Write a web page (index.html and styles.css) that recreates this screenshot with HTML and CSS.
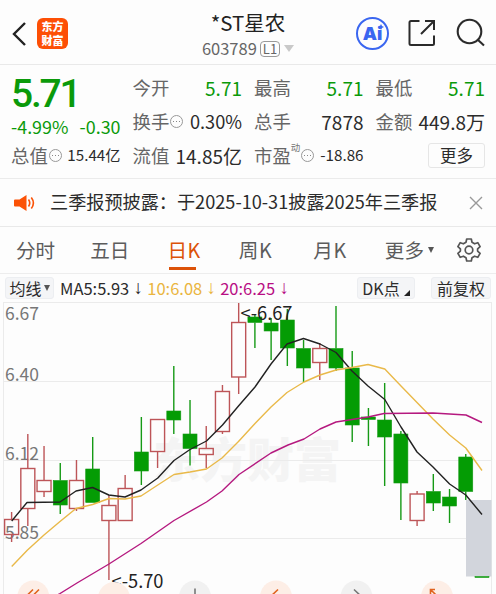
FILE: index.html
```html
<!DOCTYPE html>
<html lang="zh-CN">
<head>
  <meta charset="UTF-8">
  <meta name="viewport" content="width=device-width, initial-scale=1.0">
  <title>*ST星农 603789</title>
  <link rel="stylesheet" href="styles.css">
</head>
<body>
  <!-- Header -->
  <header class="header">
    <div class="header-left">
      <svg class="back" width="16" height="26" viewBox="0 0 16 26"><path d="M14 2 L3 13 L14 24"/></svg>
      <div class="logo"><span>东方</span><span>财富</span></div>
    </div>
    <div class="header-title">
      <h1>*ST星农</h1>
      <div class="code">603789<span class="level">L1</span><i class="caret"></i></div>
    </div>
    <div class="header-right">
      <div class="ai">Ai<svg class="spark" width="6" height="6" viewBox="0 0 6 6"><path d="M3 0 L4 2 L6 3 L4 4 L3 6 L2 4 L0 3 L2 2 Z"/></svg></div>
      <svg class="share" width="28" height="28" viewBox="0 0 28 28"><path d="M11.5 2 H3 Q1.5 2 1.5 3.5 V24.5 Q1.5 26 3 26 H24.5 Q26 26 26 24.5 V16.5 M17 2 H26 V11 M26 2 L13 15"/></svg>
      <svg class="search" width="30" height="30" viewBox="0 0 30 30"><circle cx="13.5" cy="13.5" r="11.8"/><path d="M21.5 21.5 L28 27.5"/></svg>
    </div>
  </header>

  <!-- Quote -->
  <section class="quote">
    <div class="quote-main">
      <div class="price">5.71</div>
      <div class="change"><span>-4.99%</span><span>-0.30</span></div>
      <div class="cell"><label>总值</label><i class="info"></i><b class="small">15.44亿</b></div>
    </div>
    <div class="quote-col">
      <div class="cell"><label>今开</label><b class="down">5.71</b></div>
      <div class="cell"><label>换手</label><i class="info"></i><b class="percent">0.30%</b></div>
      <div class="cell"><label>流值</label><b>14.85亿</b></div>
    </div>
    <div class="quote-col">
      <div class="cell"><label>最高</label><b class="down">5.71</b></div>
      <div class="cell"><label>总手</label><b>7878</b></div>
      <div class="cell"><label>市盈</label><sup>动</sup><i class="info"></i><b class="small">-18.86</b></div>
    </div>
    <div class="quote-col">
      <div class="cell"><label>最低</label><b class="down">5.71</b></div>
      <div class="cell"><label>金额</label><b>449.8万</b></div>
      <div class="cell"><button class="more">更多</button></div>
    </div>
  </section>

  <!-- Notice -->
  <div class="notice">
    <svg class="horn" width="21" height="18" viewBox="0 0 21 18">
      <path class="horn-body" d="M1 5.5 H5.5 L12.5 1 V17 L5.5 12.5 H1 Q0 12.5 0 11.5 V6.5 Q0 5.5 1 5.5 Z"/>
      <path class="horn-wave" d="M14.5 5.5 Q17 9 14.5 12.5 M17.3 3.5 Q21.5 9 17.3 14.5"/>
    </svg>
    <p>三季报预披露：于2025-10-31披露2025年三季报</p>
    <svg class="close" width="14" height="14" viewBox="0 0 14 14"><path d="M1 1 L13 13 M13 1 L1 13"/></svg>
  </div>

  <!-- Period tabs -->
  <nav class="tabs">
    <span>分时</span>
    <span class="five">五日</span>
    <span class="k active">日K</span>
    <span class="k">周K</span>
    <span class="k month">月K</span>
    <span>更多<i class="tri"></i></span>
    <svg class="gear" width="24" height="24" viewBox="0 0 24 24">
      <path d="M9.7 1 H14.3 L15 4.3 L17.6 5.8 L20.8 4.7 L23.1 8.7 L20.6 10.9 V13.1 L23.1 15.3 L20.8 19.3 L17.6 18.2 L15 19.7 L14.3 23 H9.7 L9 19.7 L6.4 18.2 L3.2 19.3 L0.9 15.3 L3.4 13.1 V10.9 L0.9 8.7 L3.2 4.7 L6.4 5.8 L9 4.3 Z"/>
      <circle cx="12" cy="12" r="3.8"/>
    </svg>
  </nav>

  <!-- Moving averages -->
  <div class="ma-bar">
    <span class="pill pill-ma">均线<i class="tri"></i></span>
    <span class="ma ma5">MA5:5.93<em>↓</em></span>
    <span class="ma ma10">10:6.08<em>↓</em></span>
    <span class="ma ma20">20:6.25<em>↓</em></span>
    <span class="pill pill-dk">DK点<i class="corner"></i></span>
    <span class="pill pill-fq">前复权</span>
  </div>

  <!-- Candlestick chart -->
  <svg class="chart" width="496" height="292" viewBox="0 302 496 292">
    <text class="watermark" x="153" y="477">东方财富</text>
    <path class="grid" d="M3.5 302.5 H491.5 M3.5 381.5 H491.5 M3.5 460.5 H491.5 M3.5 538.5 H491.5 M3.5 302 V594 M491.5 302 V594"/>
    <g class="axis">
      <text x="5" y="320">6.67</text>
      <text x="5" y="381">6.40</text>
      <text x="5" y="460">6.12</text>
      <text x="5" y="538.5">5.85</text>
    </g>
    <rect class="range" x="466" y="500" width="25.5" height="76.5"/>
    <g id="candles"></g>
    <polyline class="line line5" points="11.7,521 27,502.5 60,502 76,491 92.6,487.5 108.8,495 125,497 141,490 157.8,478 174,460.5 190,449.5 206.5,441 222.5,425 238.5,406 255,387 271,364 287,344 303.5,338.5 320,344 336,352.5 352,371 368,386 384.8,399.5 401,427 417,452 433,467 449.6,484 465.8,495 482,514.5"/>
    <polyline class="line line10" points="11.7,566.5 27.5,550 44,535 60,521.5 76,508.5 92.6,504.5 109,498.5 125,499 141,496 157.8,485 174,474.5 190,472 206.5,469 222,458 238.5,441.5 255,423.5 271,407 287,392.5 304,382 320,375 336,370 352,367.5 368,364.5 384.8,369 401,386 417,402.5 433,419 449.6,435 465.8,448 482,470.5"/>
    <polyline class="line line20" points="42,604 60,593.5 77,583 109,564 141,543.5 174,520.5 206.5,502 222,491 239,474.5 271,453 288,445 304,439 320,429 336,422 352,419.5 368,417 384,413.5 433,413 466,415 482,422.5"/>
    <g class="mark">
      <text x="240.5" y="319.5">&lt;-6.67</text>
      <text x="111.5" y="588">&lt;-5.70</text>
    </g>
    <g class="signals">
      <circle class="warm" cx="33.3" cy="596.5" r="16"/>
      <circle class="warm" cx="114" cy="598" r="16"/>
      <circle class="cool" cx="195" cy="596.5" r="16"/>
      <circle class="warm" cx="276" cy="596.5" r="16"/>
      <circle class="cool" cx="356.5" cy="596.5" r="16"/>
      <circle class="warm" cx="437" cy="596.5" r="16"/>
      <path class="warm-stroke" d="M33 589.5 L25 597.5 M39 589.5 L31 597.5 M278 589.5 L269 598 M435 589.5 H430.5 V594 M430.5 589.5 L439 598"/>
      <path class="cool-stroke" d="M195 588.5 V600 M354 589.5 L363 598"/>
    </g>
  </svg>

  <script>
    // [wick top, body top, body bottom, wick bottom, rising]
    const candles = [
      [512, 519.5, 534.5, 542, 1],
      [434, 468.5, 508.5, 526, 1],
      [446, 480.5, 491.5, 497, 1],
      [463, 480.5, 505, 514, 0],
      [460, 480.5, 508.5, 511, 1],
      [437, 469, 502.5, 502.5, 0],
      [495, 505.5, 520.5, 580, 1],
      [475, 488.5, 520.5, 520.5, 1],
      [417, 452, 471, 485, 0],
      [419.5, 419.5, 451.5, 468, 1],
      [366, 411, 420, 434, 0],
      [400, 434, 448.5, 465.5, 0],
      [426, 448.5, 454.5, 468, 1],
      [385, 391.5, 431.5, 434, 1],
      [303, 322.5, 377, 394, 1],
      [315, 317, 322.5, 348, 0],
      [318, 323, 331, 360, 0],
      [309, 320, 348, 366, 0],
      [340, 348.5, 368, 382, 0],
      [343, 348.5, 362.5, 380, 1],
      [306, 348.5, 368, 371, 0],
      [351, 368, 425, 442, 0],
      [408, 417, 419.5, 446, 0],
      [383, 420, 437, 486, 0],
      [431, 434, 483, 520, 0],
      [491, 494, 520.5, 526, 1],
      [474, 491.5, 503, 511, 0],
      [489, 497, 506, 523, 0],
      [454, 457, 491.5, 500, 0],
      [576.5, 576.5, 577.5, 577.5, 0]
    ];

    const step = 16.22;
    let html = "";
    candles.forEach(([high, top, bottom, low, up], i) => {
      const x = 11.6 + i * step;
      html += `<g class="${up ? "up" : "fall"}">` +
        `<path d="M${x} ${high} V${top} M${x} ${bottom} V${low}"/>` +
        `<rect x="${x - 7}" y="${top}" width="14" height="${bottom - top}"/></g>`;
    });
    document.getElementById("candles").innerHTML = html;
  </script>
</body>
</html>
```

FILE: styles.css
```css
/* General */
* {
  box-sizing: border-box;
}

body {
  margin: 0;
  width: 496px;
  height: 594px;
  overflow: hidden;
  background: #fdfdfd;
  color: #2b2b2b;
  font-family: "Noto Sans CJK SC", sans-serif;
  line-height: 1;
}

svg {
  display: block;
  flex: none;
  fill: none;
}

i, em, b {
  font-style: normal;
  font-weight: normal;
}

/* Header */
.header {
  display: grid;
  grid-template-columns: 1fr 100px 1fr;
  height: 65px;
  padding: 0 11px;
  border-bottom: 1px solid #e9e9e9;
}

.header-left {
  display: flex;
  align-items: center;
  gap: 10px;
  padding-top: 3px;
}

.back {
  stroke: #222;
  stroke-width: 2.4;
}

.logo {
  display: flex;
  flex-direction: column;
  align-items: center;
  justify-content: center;
  width: 31px;
  height: 31px;
  border-radius: 6px;
  background: #fd4f05;
  color: #fff;
  font-size: 11px;
  font-weight: 900;
  line-height: 13.5px;
}

.header-title {
  display: flex;
  flex-direction: column;
  align-items: center;
}

.header-title h1 {
  margin: 10px 0 0;
  font-size: 20.5px;
  font-weight: normal;
  line-height: 24px;
  white-space: nowrap;
  color: #222;
}

.code {
  display: flex;
  align-items: center;
  height: 29px;
  font-size: 16.5px;
  color: #666;
}

.level {
  margin-left: 3px;
  padding: 0 2px;
  border: 1px solid #999;
  border-radius: 4px;
  font-size: 13px;
  line-height: 14px;
}

.caret {
  margin-left: 4px;
  border: 5px solid transparent;
  border-top: 7px solid #c9c9c9;
  border-bottom: 0;
}

.header-right {
  display: flex;
  align-items: center;
  justify-content: flex-end;
  padding-top: 2px;
}

.ai {
  position: relative;
  width: 33px;
  height: 33px;
  margin-right: 19px;
  border: 2px solid #3a66f0;
  border-radius: 50%;
  color: #3a66f0;
  font-family: Inter, sans-serif;
  font-size: 18px;
  font-weight: 900;
  line-height: 29px;
  text-align: center;
}

.spark {
  position: absolute;
  top: 5px;
  right: 3px;
  fill: #3a66f0;
}

.share {
  margin-right: 20px;
  stroke: #2b2b2b;
  stroke-width: 2;
}

.search {
  margin-right: -1px;
  stroke: #2b2b2b;
  stroke-width: 2.1;
}

/* Quote */
.quote {
  display: grid;
  grid-template-columns: repeat(4, 109.5px);
  gap: 12px;
  height: 114px;
  padding: 5px 11px 0;
  border-bottom: 1px solid #ebebeb;
}

.price {
  height: 47px;
  color: #0a9a0a;
  font-family: Roboto, sans-serif;
  font-size: 39px;
  font-weight: 500;
  font-kerning: none;
  letter-spacing: -2.2px;
  line-height: 49px;
}

.change {
  display: flex;
  justify-content: space-between;
  height: 21px;
  color: #0a9a0a;
  font-size: 17.9px;
  line-height: 19px;
}

.cell {
  display: flex;
  align-items: center;
  height: 34px;
  white-space: nowrap;
}

.cell label {
  font-size: 18.4px;
  color: #666;
}

.cell b {
  margin-left: auto;
  font-size: 19px;
}

.cell b.down {
  color: #0a9a0a;
}

.cell b.small {
  font-size: 15.2px;
}

.cell b.percent {
  font-size: 18.2px;
}

.cell sup {
  align-self: flex-start;
  margin-top: 3px;
  font-size: 9.5px;
  line-height: 12px;
  color: #777;
}

.info {
  flex: none;
  width: 13px;
  height: 13px;
  margin-left: 1px;
  border: 1px solid #999;
  border-radius: 50%;
  background: radial-gradient(circle, #888 0.8px, transparent 1px) center / 3px 3px no-repeat,
    radial-gradient(circle, #888 0.8px, transparent 1px) 1px center / 3px 3px no-repeat,
    radial-gradient(circle, #888 0.8px, transparent 1px) 7px center / 3px 3px no-repeat;
}

.more {
  width: 57px;
  height: 25px;
  margin-left: auto;
  padding: 0;
  border: 1px solid #e6e6e6;
  border-radius: 3px;
  background: #fdfdfd;
  color: #2b2b2b;
  font-family: inherit;
  font-size: 16.5px;
  line-height: 22px;
}

/* Notice */
.notice {
  display: flex;
  align-items: center;
  height: 48px;
  padding: 0 13px 0 14px;
  border-bottom: 1px solid #e9e9e9;
}

.horn-body {
  fill: #fb5206;
}

.horn-wave {
  stroke: #fb5206;
  stroke-width: 1.6;
}

.notice p {
  flex: 1;
  margin: -2px 0 0 15px;
  font-size: 18.15px;
  white-space: nowrap;
}

.close {
  stroke: #999;
  stroke-width: 1.4;
}

/* Tabs */
.tabs {
  display: flex;
  align-items: center;
  gap: 38px;
  height: 47px;
  padding: 0 15px 0 16px;
  border-bottom: 1px solid #ededed;
  color: #5c5c5c;
  font-size: 19.6px;
}

.tabs span {
  display: flex;
  align-items: center;
  height: 100%;
  white-space: nowrap;
}

.tabs .five {
  margin-left: -3px;
}

.tabs .k {
  width: 34px;
  letter-spacing: 0.5px;
}

.tabs .month {
  margin-left: 3px;
}

.tabs .active {
  color: #dc5208;
  background: linear-gradient(#dc5208, #dc5208) 2px 40px / 27px 3px no-repeat;
}

.tri {
  margin-left: 4px;
  border: 3.5px solid transparent;
  border-top: 6px solid #555;
  border-bottom: 0;
}

.gear {
  margin-left: -15px;
  stroke: #555;
  stroke-width: 1.7;
  stroke-linejoin: round;
}

/* Moving averages */
.ma-bar {
  display: flex;
  align-items: center;
  height: 28px;
  padding: 0 5px;
  font-size: 16.5px;
  white-space: nowrap;
}

.pill {
  display: flex;
  align-items: center;
  justify-content: center;
  height: 22px;
  border: 1px solid #eceef1;
  border-radius: 3px;
  background: #f4f5f7;
  font-size: 16px;
}

.pill-ma {
  width: 49px;
  margin-right: 6px;
}

.pill-ma .tri {
  margin-left: 2px;
}

.pill-dk {
  width: 58px;
  margin-left: auto;
}

.pill-fq {
  width: 60px;
  margin-left: 16px;
}

.corner {
  align-self: flex-end;
  margin: 0 0 2px 4px;
  border-bottom: 6px solid #222;
  border-left: 6px solid transparent;
}

.ma {
  display: flex;
  align-items: center;
  margin-right: 3px;
}

.ma em {
  width: 12px;
  margin-left: 3px;
  font-family: "Liberation Sans", sans-serif;
  font-size: 19px;
  line-height: 16px;
  text-align: center;
}

.ma10 {
  color: #eab53f;
}

.ma20 {
  color: #b80e84;
}

/* Chart */
.grid {
  stroke: #ebebeb;
}

.watermark {
  fill: #f4f4f4;
  font-size: 47px;
  font-weight: 900;
}

.axis {
  fill: #777;
  font-size: 17.5px;
}

.mark {
  fill: #222;
  font-size: 18.3px;
}

.range {
  fill: #d2d5dc;
}

.up {
  stroke: #bd5558;
  stroke-width: 1.4;
}

.fall {
  stroke: #169a16;
  stroke-width: 1.4;
}

.fall rect {
  fill: #049c04;
  stroke-width: 0.6;
}

.line {
  stroke-width: 1.4;
  stroke-linejoin: round;
}

.line5 {
  stroke: #222;
}

.line10 {
  stroke: #e9b949;
}

.line20 {
  stroke: #b5197f;
}

.warm {
  fill: #fdeee6;
}

.cool {
  fill: #f1f1f1;
}

.warm-stroke {
  stroke: #e0631f;
  stroke-width: 1.6;
}

.cool-stroke {
  stroke: #777;
  stroke-width: 1.6;
}
```
